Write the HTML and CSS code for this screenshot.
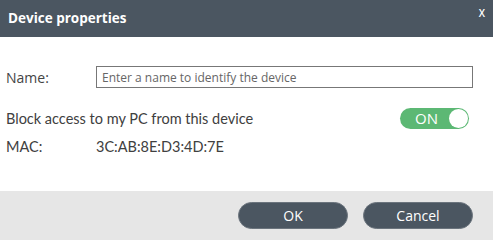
FILE: index.html
```html
<!DOCTYPE html>
<html>
<head>
<meta charset="utf-8">
<link rel="stylesheet" href="styles.css">
</head>
<body>
<div class="dialog">
  <div class="header">
    <span class="title">Device properties</span>
    <span class="close">X</span>
  </div>
  <div class="content">
    <div class="row-grid row-name">
      <label class="label">Name:</label>
      <input class="name-input" type="text" placeholder="Enter a name to identify the device">
    </div>
    <div class="row-block">
      <span class="block-text">Block access to my PC from this device</span>
      <div class="toggle">
        <span class="toggle-text">ON</span>
        <span class="knob"></span>
      </div>
    </div>
    <div class="row-grid row-mac">
      <span class="mac-label">MAC:</span>
      <span class="mac-value">3C:AB:8E:D3:4D:7E</span>
    </div>
  </div>
  <div class="footer">
    <button class="btn">OK</button>
    <button class="btn">Cancel</button>
  </div>
</div>
</body>
</html>
```
FILE: styles.css
```css
html, body {
  margin: 0;
  padding: 0;
  background: #ffffff;
}
.dialog {
  width: 493px;
  height: 240px;
  display: flex;
  flex-direction: column;
  font-family: "Open Sans", sans-serif;
}
.header {
  height: 37px;
  background: #4b5661;
  display: flex;
  justify-content: space-between;
  align-items: flex-start;
  padding: 0 8px 0 8px;
  box-sizing: border-box;
}
.title {
  color: #ffffff;
  font-weight: 700;
  font-size: 13.5px;
  line-height: 37px;
}
.close {
  color: #ffffff;
  font-weight: 600;
  font-size: 10px;
  line-height: 10px;
  margin-top: 8px;
  font-family: "Open Sans", sans-serif;
}
.content {
  flex: 1;
  padding: 29px 20px 0 6px;
  box-sizing: border-box;
}
.row-grid {
  display: grid;
  grid-template-columns: 90px 1fr;
  align-items: center;
}
.label {
  color: #444444;
  font-size: 14px;
  font-family: "Open Sans", sans-serif;
}
.name-input {
  height: 22px;
  box-sizing: border-box;
  border: 1px solid #777777;
  padding: 0 5px;
  font-family: "Open Sans", sans-serif;
  font-size: 12px;
  color: #444;
  outline: none;
}
.name-input::placeholder {
  color: #666666;
}
.row-block {
  margin-top: 20px;
  display: flex;
  justify-content: space-between;
  align-items: center;
}
.block-text,
.mac-label,
.mac-value {
  font-family: "Lato", sans-serif;
  font-size: 14.5px;
  color: #404040;
}
.toggle {
  width: 69px;
  height: 21px;
  border-radius: 11px;
  background: #5cb874;
  margin-right: 4px;
  display: flex;
  align-items: center;
  justify-content: space-between;
  padding: 0 1px 0 15px;
  box-sizing: border-box;
}
.toggle-text {
  color: #ffffff;
  font-family: "Open Sans", sans-serif;
  font-size: 15px;
  line-height: 21px;
}
.knob {
  width: 19px;
  height: 19px;
  border-radius: 50%;
  background: #ffffff;
}
.row-mac {
  margin-top: 9px;
}
.footer {
  height: 49px;
  background: #e6e6e6;
  display: flex;
  justify-content: flex-end;
  align-items: flex-start;
  gap: 15px;
  padding: 11px 20px 0 0;
  box-sizing: border-box;
}
.btn {
  width: 110px;
  height: 27px;
  border-radius: 14px;
  background: #4b5661;
  border: 1px solid #6b747d;
  color: #ffffff;
  font-family: "Open Sans", sans-serif;
  font-size: 14px;
  padding: 0;
}
```
